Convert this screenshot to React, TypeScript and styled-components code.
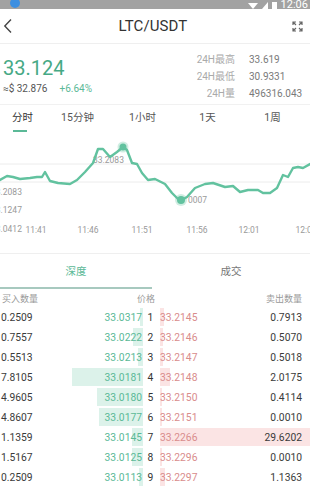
import React from "react";
import styled, { createGlobalStyle } from "styled-components";

const GlobalStyle = createGlobalStyle`
  * { box-sizing: border-box; }
  body {
    margin: 0;
    background: #fff;
    font-family: Roboto, "Noto Sans CJK SC", sans-serif;
    overflow: hidden;
  }
`;

const green = "#5bb997";
const red = "#d98c8c";

type Level = {
  buyQty: string;
  buyPrice: string;
  buyBar: number;
  sellPrice: string;
  sellQty: string;
  sellBar: number;
};

const levels: Level[] = [
  { buyQty: "0.2509", buyPrice: "33.0317", buyBar: 3, sellPrice: "33.2145", sellQty: "0.7913", sellBar: 4 },
  { buyQty: "0.7557", buyPrice: "33.0222", buyBar: 10, sellPrice: "33.2146", sellQty: "0.5070", sellBar: 3 },
  { buyQty: "0.5513", buyPrice: "33.0213", buyBar: 5, sellPrice: "33.2147", sellQty: "0.5018", sellBar: 3 },
  { buyQty: "7.8105", buyPrice: "33.0181", buyBar: 71, sellPrice: "33.2148", sellQty: "2.0175", sellBar: 10 },
  { buyQty: "4.9605", buyPrice: "33.0180", buyBar: 46, sellPrice: "33.2150", sellQty: "0.4114", sellBar: 2 },
  { buyQty: "4.8607", buyPrice: "33.0177", buyBar: 44, sellPrice: "33.2151", sellQty: "0.0010", sellBar: 2 },
  { buyQty: "1.1359", buyPrice: "33.0145", buyBar: 11, sellPrice: "33.2266", sellQty: "29.6202", sellBar: 150 },
  { buyQty: "1.5167", buyPrice: "33.0125", buyBar: 11, sellPrice: "33.2296", sellQty: "0.0010", sellBar: 2 },
  { buyQty: "0.2509", buyPrice: "33.0113", buyBar: 4, sellPrice: "33.2297", sellQty: "1.1363", sellBar: 5 },
];

const periods = ["分时", "15分钟", "1小时", "1天", "1周"];

const linePoints =
  "0,45 7,41 13,42 20,44 30,43 37,42 42,42 45,37 50,46 58,48 70,49 77,45 85,37 93,28 98,14 103,14 110,22 117,17 123,12 127,15 132,28 137,29 142,38 148,45 155,44 165,49 172,58 180,66 187,62 195,53 205,49 213,48 225,52 233,51 240,57 248,55 258,55 263,58 270,58 277,53 283,40 288,42 293,33 298,32 303,33 310,29";

const times = [
  { label: "11:41", x: 36 },
  { label: "11:46", x: 88 },
  { label: "11:51", x: 142 },
  { label: "11:56", x: 197 },
  { label: "12:01", x: 249 },
  { label: "12:06", x: 306 },
];

const Page = styled.div`
  width: 310px;
  height: 492px;
  overflow: hidden;
  background: #fff;
`;

const StatusBar = styled.div`
  height: 9px;
  background: #a2a2a2;
  display: flex;
  align-items: flex-end;
  justify-content: space-between;
  padding: 0 0 0 10px;
  overflow: hidden;
  color: #fff;
`;

const StatusRight = styled.div`
  display: flex;
  align-items: flex-end;
  gap: 4px;
`;

const StatusTime = styled.span`
  font-size: 11px;
  line-height: 9px;
  height: 9px;
  overflow: hidden;
  padding-right: 2px;
`;

const NavBar = styled.div`
  height: 35px;
  display: grid;
  grid-template-columns: 1fr auto 1fr;
  align-items: center;
  padding: 0 7px 0 3px;
  border-bottom: 1px solid #efefef;
`;

const Title = styled.div`
  font-size: 15px;
  color: #333;
  letter-spacing: 0.1px;
`;

const NavRight = styled.div`
  display: flex;
  justify-content: flex-end;
`;

const Ticker = styled.div`
  height: 61px;
  display: flex;
  justify-content: space-between;
  padding: 9px 5px 0 3px;
  border-bottom: 1px solid #f1f1f1;
`;

const PriceBlock = styled.div`
  display: flex;
  flex-direction: column;
`;

const LastPrice = styled.div`
  font-size: 20px;
  line-height: 24px;
  color: #46a985;
  margin-top: 3px;
`;

const SubLine = styled.div`
  display: flex;
  gap: 12px;
  font-size: 10px;
  line-height: 14px;
  margin-top: 2px;
`;

const Fiat = styled.span`
  color: #555;
`;

const Change = styled.span`
  color: ${green};
`;

const Stats = styled.div`
  display: grid;
  grid-template-columns: auto 56px;
  column-gap: 14px;
  font-size: 10px;
  line-height: 14.5px;
`;

const StatLabel = styled.span`
  justify-self: end;
  color: #aaa;
`;

const StatValue = styled.span`
  color: #7a7a7a;
`;

const Periods = styled.div`
  height: 30px;
  display: grid;
  grid-template-columns: 45px repeat(4, 65px);
`;

const Period = styled.div<{ $active?: boolean }>`
  position: relative;
  justify-self: center;
  padding-top: 6px;
  font-size: 10.5px;
  line-height: 14px;
  color: ${(p) => (p.$active ? "#333" : "#555")};
  &::after {
    content: "";
    display: ${(p) => (p.$active ? "block" : "none")};
    position: absolute;
    left: 1px;
    top: 25px;
    width: 14px;
    height: 2px;
    background: ${green};
  }
`;

const ChartBox = styled.div`
  height: 119px;
  border-bottom: 1px solid #efefef;
`;

const DepthTabs = styled.div`
  display: grid;
  grid-template-columns: 152px 1fr;
`;

const DepthTab = styled.div<{ $active?: boolean }>`
  height: 35px;
  display: flex;
  align-items: center;
  justify-content: center;
  font-size: 10.5px;
  color: ${(p) => (p.$active ? green : "#777")};
  border-bottom: 2px solid ${(p) => (p.$active ? "#a7c9bf" : "transparent")};
`;

const BookHead = styled.div`
  height: 18px;
  display: grid;
  grid-template-columns: 1fr auto 1fr;
  align-items: center;
  padding: 0 8px 0 2px;
  font-size: 9px;
  color: #999;
`;

const HeadCenter = styled.span`
  padding-right: 12px;
`;

const HeadRight = styled.span`
  justify-self: end;
`;

const Row = styled.div`
  height: 20px;
  display: grid;
  grid-template-columns: 144px 13px 1fr;
  font-size: 10.3px;
`;

const Side = styled.div<{ $sell?: boolean }>`
  position: relative;
  display: flex;
  align-items: center;
  justify-content: space-between;
  padding: ${(p) => (p.$sell ? "0 8px 0 3px" : "0 2px 0 1px")};
`;

const Bar = styled.div<{ $sell?: boolean }>`
  position: absolute;
  top: 1px;
  bottom: 1px;
  ${(p) => (p.$sell ? "left: 3px;" : "right: 1px;")}
  background: ${(p) => (p.$sell ? "#fbe4e4" : "#dcf2ea")};
`;

const Qty = styled.span`
  position: relative;
  color: #3a3a3a;
`;

const Price = styled.span<{ $sell?: boolean }>`
  position: relative;
  color: ${(p) => (p.$sell ? red : green)};
`;

const Index = styled.div`
  display: flex;
  align-items: center;
  justify-content: center;
  color: #333;
`;

const BackIcon = () => (
  <svg width="10" height="16" viewBox="0 0 10 16">
    <path d="M8 1.5 L1.8 8 L8 14.5" fill="none" stroke="#444" strokeWidth="1.4" />
  </svg>
);

const ExpandIcon = () => (
  <svg width="11" height="11" viewBox="0 0 11 11" fill="none" stroke="#666" strokeWidth="1.2">
    <path d="M1 4V1h3M1 1l3 3" />
    <path d="M7 1h3v3M10 1L7 4" />
    <path d="M1 7v3h3M1 10l3-3" />
    <path d="M10 7v3H7M10 10L7 7" />
  </svg>
);

const PriceChart = () => (
  <svg width="310" height="118" viewBox="0 0 310 118">
    <line x1="0" y1="29" x2="310" y2="29" stroke="#ececec" strokeWidth="1" />
    <line x1="0" y1="47" x2="310" y2="47" stroke="#ececec" strokeWidth="1" />
    <g fontFamily="Roboto, sans-serif" fontSize="8.5" fill="#9a9a9a">
      <text x="93" y="28">33.2083</text>
      <text x="-9" y="60">33.2083</text>
      <text x="-9" y="78">33.1247</text>
      <text x="-9" y="97">33.0412</text>
      <text x="188" y="68">0007</text>
      {times.map((t) => (
        <text key={t.label} x={t.x} y="98" textAnchor="middle">
          {t.label}
        </text>
      ))}
    </g>
    <polyline
      points={linePoints}
      fill="none"
      stroke="#62c29f"
      strokeWidth="2.4"
      strokeLinejoin="round"
      strokeLinecap="round"
    />
    <circle cx="123" cy="12" r="5.5" fill="#62c29f" opacity="0.3" />
    <circle cx="123" cy="12" r="3.5" fill="#62c29f" />
    <circle cx="181" cy="65" r="6" fill="#62c29f" opacity="0.3" />
    <circle cx="181" cy="65" r="4" fill="#62c29f" />
  </svg>
);

export default function App() {
  return (
    <Page>
      <GlobalStyle />
      <StatusBar>
        <svg width="10" height="9" viewBox="0 0 10 9">
          <circle cx="5" cy="3" r="5" fill="#3d8fe0" />
        </svg>
        <StatusRight>
          <svg width="10" height="6" viewBox="0 0 10 6">
            <path d="M0 0h10L5 6z" fill="#fff" />
          </svg>
          <svg width="6" height="7" viewBox="0 0 6 7">
            <path d="M6 0v7H0z" fill="#fff" />
          </svg>
          <svg width="5" height="7" viewBox="0 0 5 7">
            <rect x="0" y="0" width="5" height="7" fill="#fff" />
          </svg>
          <StatusTime>12:06</StatusTime>
        </StatusRight>
      </StatusBar>

      <NavBar>
        <BackIcon />
        <Title>LTC/USDT</Title>
        <NavRight>
          <ExpandIcon />
        </NavRight>
      </NavBar>

      <Ticker>
        <PriceBlock>
          <LastPrice>33.124</LastPrice>
          <SubLine>
            <Fiat>≈$ 32.876</Fiat>
            <Change>+6.64%</Change>
          </SubLine>
        </PriceBlock>
        <Stats>
          <StatLabel>24H最高</StatLabel>
          <StatValue>33.619</StatValue>
          <StatLabel>24H最低</StatLabel>
          <StatValue>30.9331</StatValue>
          <StatLabel>24H量</StatLabel>
          <StatValue>496316.043</StatValue>
        </Stats>
      </Ticker>

      <Periods>
        {periods.map((p, i) => (
          <Period key={p} $active={i === 0}>
            {p}
          </Period>
        ))}
      </Periods>

      <ChartBox>
        <PriceChart />
      </ChartBox>

      <DepthTabs>
        <DepthTab $active>深度</DepthTab>
        <DepthTab>成交</DepthTab>
      </DepthTabs>

      <BookHead>
        <span>买入数量</span>
        <HeadCenter>价格</HeadCenter>
        <HeadRight>卖出数量</HeadRight>
      </BookHead>

      {levels.map((l, i) => (
        <Row key={i}>
          <Side>
            <Bar style={{ width: l.buyBar }} />
            <Qty>{l.buyQty}</Qty>
            <Price>{l.buyPrice}</Price>
          </Side>
          <Index>{i + 1}</Index>
          <Side $sell>
            <Bar $sell style={{ width: l.sellBar }} />
            <Price $sell>{l.sellPrice}</Price>
            <Qty>{l.sellQty}</Qty>
          </Side>
        </Row>
      ))}
    </Page>
  );
}
